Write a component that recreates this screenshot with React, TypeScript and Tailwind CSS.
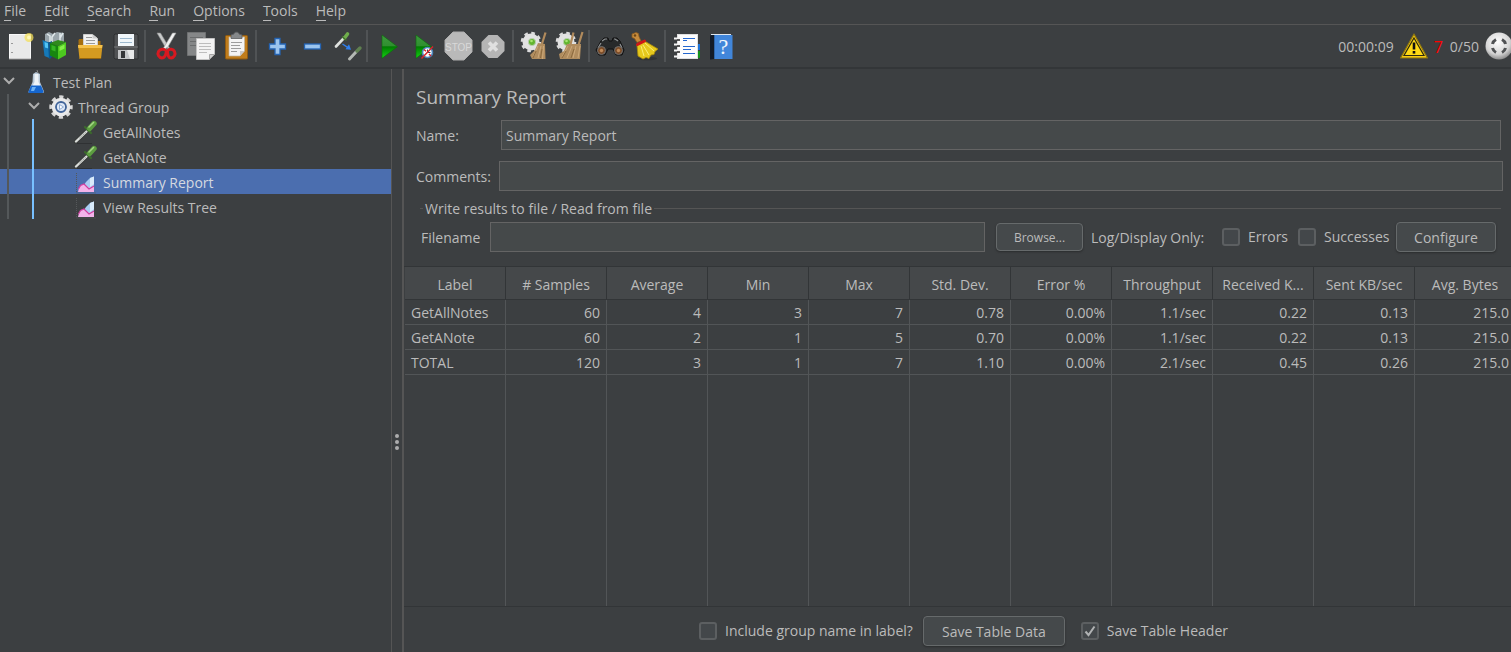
import type { ReactNode } from "react";

type IconProps = { children: ReactNode };

function Icon({ children }: IconProps) {
  return (
    <svg viewBox="0 0 32 32" className="size-8 shrink-0" fill="none" aria-hidden="true">
      {children}
    </svg>
  );
}

const NewIcon = () => (
  <Icon>
    <rect x="5.5" y="4.5" width="21" height="24" fill="#e9e9e9" stroke="#f8f8f8" />
    <path d="M5 29h22" stroke="#9a9a9a" />
    <path d="M7 13.500h2M7 22.500h2" stroke="#999" />
    <circle cx="25" cy="7.500" r="4.500" fill="#f3df5a" opacity=".75" />
    <circle cx="25" cy="7.500" r="2" fill="#fff8b8" />
  </Icon>
);

const TemplatesIcon = () => (
  <Icon>
    <path d="M6 4l4-2 4 2 4-2 7 1v9H6z" fill="#9aa5ab" />
    <path d="M8 4l3 2v6M16 3l-3 4v5M21 3v8M24 3l-3 5" stroke="#dfe7ea" strokeWidth="1.500" />
    <path d="M3.500 10l8 3v15.500l-6-2.500z" fill="#1679b8" />
    <path d="M5.500 12l4 1.500v5l-3.500-1z" fill="#52c4f5" />
    <path d="M9 13l4-2v16l-3 2z" fill="#0b588f" />
    <path d="M11 13l8 3v13.500l-8-4z" fill="#17860f" />
    <path d="M12.500 15l4 1.500v5l-4-1.500z" fill="#35b524" />
    <path d="M19 16l8-4v13l-8 4.500z" fill="#4cc81f" />
    <path d="M20.500 17l5-2.500v4l-5 2.500z" fill="#86ee4a" />
    <path d="M11 13l8-3 8 2-8 4z" fill="#2f8a1c" />
  </Icon>
);

const OpenIcon = () => (
  <Icon>
    <path d="M4.500 12V10l1-1h6l1 2h14v6H4.500z" fill="#a66f10" />
    <path d="M9.500 4.500h9l5 4V20h-14z" fill="#f1f1f1" stroke="#cfcfcf" />
    <path d="M12 7.500h6M12 10.500h9M12 13.500h9" stroke="#9b9b9b" />
    <path d="M18.500 4.500v4h5" fill="#ccc" />
    <path d="M4 15h24.500l-1.500 14H5.500z" fill="#d49a20" />
    <path d="M4 15h24.500l-.5 3H4.300z" fill="#f5c14b" />
    <path d="M5.500 28.500h21.500" stroke="#96660f" />
  </Icon>
);

const SaveIcon = () => (
  <Icon>
    <path d="M5 5l1-1h22l1 1v24H6l-1-1z" fill="#505254" stroke="#2d2f30" />
    <rect x="9" y="4" width="16" height="12" fill="#f0f6fa" />
    <path d="M11 8.500h12M11 12.500h12" stroke="#9db9cf" />
    <path d="M5 17h24" stroke="#77797a" />
    <rect x="9" y="20" width="16" height="9" fill="#c4c6c8" />
    <rect x="12" y="21" width="4" height="7" fill="#343638" />
    <path d="M18 20h7v9h-4z" fill="#e7e8e8" />
  </Icon>
);

const CutIcon = () => (
  <Icon>
    <path d="M7 3l3.500 0 9 15-2 3z" fill="#c9cbcb" stroke="#8a8c8c" strokeWidth=".6" />
    <path d="M26 3l-3.500 0-9 15 2 3z" fill="#f1f2f2" stroke="#999b9b" strokeWidth=".6" />
    <path d="M16 20.500c-2-2-6-1.500-7.500 1-1.500 3 .5 6 3.500 6.500 3 0 4-3 4.500-7.500z" stroke="#d71920" strokeWidth="3" />
    <path d="M17.500 20.500c2-2 6-1.500 7 1 1.500 3-.5 6-3.500 6.500-3 0-3.500-3-3.500-7.500z" stroke="#d71920" strokeWidth="3" />
    <circle cx="16.700" cy="18.500" r="1" fill="#777" />
  </Icon>
);

const CopyIcon = () => (
  <Icon>
    <path d="M2.500 2.500h18v23h-18z" fill="#858788" stroke="#707273" />
    <path d="M5 7.500h13M5 11.500h6M5 15.500h6" stroke="#6a6c6d" />
    <path d="M11.500 8.500h18v16l-5 5h-13z" fill="#f3f3f3" stroke="#c3c3c3" />
    <path d="M14 13.500h12M14 16.500h12M14 19.500h12M14 22.500h8" stroke="#bdbdbd" />
    <path d="M24.500 29.500v-5h5z" fill="#cfcfcf" stroke="#a6a6a6" />
  </Icon>
);

const PasteIcon = () => (
  <Icon>
    <rect x="5.500" y="5.500" width="22" height="23.500" rx="1" fill="#c07d1c" stroke="#8f5a10" />
    <path d="M9 7h15.500v14l-4.500 5H9z" fill="#f4f4f4" stroke="#bdb5a5" strokeWidth=".7" />
    <path d="M11 12.500h11M11 15.500h9M11 18.500h10M11 21.500h6" stroke="#9c9c9c" />
    <path d="M20 26v-5h4.500z" fill="#c9c9c9" />
    <path d="M11 8.500V5l3-1c0-2.500 5-2.500 5 0l3 1v3.500z" fill="#85888a" stroke="#5c5e60" strokeWidth=".8" />
  </Icon>
);

const PlusIcon = () => (
  <Icon>
    <path d="M14 8.500h5v5.500h5.500v5H19v5.500h-5V19H8.500v-5H14z" fill="#9bc4ee" stroke="#2464b4" strokeWidth="1.300" />
  </Icon>
);

const MinusIcon = () => (
  <Icon>
    <rect x="8.500" y="14" width="16" height="5" fill="#9bc4ee" stroke="#2464b4" strokeWidth="1.300" />
  </Icon>
);

const ToggleIcon = () => (
  <Icon>
    <path d="M5 16.500l8-8.500" stroke="#dfe2df" strokeWidth="2.600" strokeLinecap="round" />
    <path d="M13.500 8l3-4" stroke="#6fae4b" strokeWidth="3.600" strokeLinecap="round" />
    <path d="M11 6.500l4.500 4" stroke="#3f6f2b" strokeWidth="1.200" />
    <path d="M11.500 14l6 4" stroke="#2f7fee" strokeWidth="1.500" />
    <path d="M20 19.800l-5.500-.6 3.500-5z" fill="#2f7fee" />
    <path d="M18.500 29l6.500-7" stroke="#b4b8b4" strokeWidth="3" strokeLinecap="round" />
    <path d="M26 21l3-3" stroke="#5f8050" strokeWidth="3.400" strokeLinecap="round" />
  </Icon>
);

const PlayShape = ({ id }: { id: string }) => (
  <>
    <defs>
      <linearGradient id={id} x1="0" y1="0" x2="0" y2="1">
        <stop offset="0" stopColor="#3d9a3d" />
        <stop offset=".48" stopColor="#2f8f2f" />
        <stop offset=".5" stopColor="#007a00" />
        <stop offset="1" stopColor="#14d314" />
      </linearGradient>
    </defs>
    <path d="M10 5l15.500 11.700L10 28.300z" fill={`url(#${id})`} stroke="#0a6b0a" strokeWidth=".6" />
  </>
);

const PlayIcon = () => (
  <Icon>
    <PlayShape id="play" />
  </Icon>
);

const PlayNoTimersIcon = () => (
  <Icon>
    <g transform="translate(-1 0)">
      <PlayShape id="playNoTimers" />
    </g>
    <circle cx="20.500" cy="22.500" r="5" fill="#fff" stroke="#4d86bd" strokeWidth="1.600" />
    <path d="M20.500 19.500v3l3 0" stroke="#345" />
    <path d="M14.500 28.500l11.500-12M17 19.500l2 1.800M22 24l2 2" stroke="#d7252b" strokeWidth="1.500" />
  </Icon>
);

const StopIcon = () => (
  <Icon>
    <path d="M11 2h11l8 8v12l-8 8H11l-8-8V10z" fill="#b9b9b9" stroke="#adadad" />
    <text x="16.500" y="20.500" textAnchor="middle" className="font-['Liberation_Sans'] text-[10px]" fill="#d8d8d8">
      STOP
    </text>
  </Icon>
);

const ShutdownIcon = () => (
  <Icon>
    <path d="M11.500 5h9l7 7v9l-7 7h-9l-7-7v-9z" fill="#b5b5b5" />
    <path d="M12 12.500l8 8M20 12.500l-8 8" stroke="#e0e0e0" strokeWidth="3.600" />
  </Icon>
);

const Gear = () => (
  <>
    <circle cx="13" cy="12" r="8.500" fill="#e2e2e2" />
    <circle cx="13" cy="12" r="9" stroke="#dcdcdc" strokeWidth="2.600" strokeDasharray="3.600 3.468" />
    <circle cx="14" cy="12" r="3.600" fill="#62b52f" stroke="#b9cfae" />
    <circle cx="13.500" cy="11" r="1.300" fill="#a7e670" />
  </>
);

const ClearIcon = () => (
  <Icon>
    <Gear />
    <path d="M27.500 2.500l-4 13" stroke="#b08a5c" strokeWidth="2.200" />
    <path d="M20 13l7 1 .5 15H14l-2-4 5-5z" fill="#b08c5e" />
    <path d="M20 16l-5 11M23 16l-3 12M25.500 16l-1 13" stroke="#cda97a" />
    <path d="M18 21l-3 7M24 19l-1.500 9" stroke="#8c6a3e" />
  </Icon>
);

const ClearAllIcon = () => (
  <Icon>
    <Gear />
    <path d="M20.500 2.500l-3 12M29.500 2l-4 13" stroke="#b08a5c" strokeWidth="2.200" />
    <path d="M14 14l14 0-1 15H7l-1-5 5-3z" fill="#b08c5e" />
    <path d="M15 16l-6 11M19 16l-5 12M23 16l-3 12M27 16l-2 12" stroke="#cda97a" />
    <path d="M13 21l-4 7M21 19l-3 9" stroke="#8c6a3e" />
  </Icon>
);

const SearchIcon = () => (
  <Icon>
    <path d="M7 11l3-3h4l1 3h3l1-3h4l3 3 4 9-2 5h-6l-3-6h-5l-3 6H5l-3-5z" fill="#27292a" stroke="#111" />
    <path d="M8 11l3-2h2M24 11l-3-2h-1M4 18l3-5M28 18l-2-4" stroke="#8d9092" strokeWidth="1.200" />
    <circle cx="7.500" cy="20.500" r="4" fill="#7c4d29" stroke="#6e7072" />
    <circle cx="24.500" cy="20.500" r="4" fill="#7c4d29" stroke="#6e7072" />
    <circle cx="7.500" cy="20.500" r="1.700" fill="#c08a58" />
    <circle cx="24.500" cy="20.500" r="1.700" fill="#c08a58" />
  </Icon>
);

const ResetSearchIcon = () => (
  <Icon>
    <ellipse cx="18" cy="28.500" rx="10" ry="1.700" fill="#2a2c2d" opacity=".6" />
    <path d="M3 4l4-1.500 2.500 1 .5 3 2 4.500-4 1.500-2.500-4-2.500-1z" fill="#c58a3c" stroke="#8c5b1d" strokeWidth=".8" />
    <circle cx="6" cy="5.500" r="1.200" fill="#6d4514" />
    <path d="M8 15l7.500-4L29 19l-3 2.500-1 3-3 .5-2 3.500-3-1-3 1.500L9 26z" fill="#e6c81c" stroke="#a98c0a" strokeWidth=".8" />
    <path d="M12 16l3 10M14 15l6 10M16 13l9 8" stroke="#fbee74" />
    <path d="M8.500 14.500l7-3.500" stroke="#cf1818" strokeWidth="3" strokeLinecap="round" />
  </Icon>
);

const FunctionHelperIcon = () => (
  <Icon>
    <path d="M27 14h3v6h-3z" fill="#1a73d8" />
    <path d="M27 21h3v7h-3z" fill="#11921a" />
    <rect x="7.500" y="4.500" width="20" height="24" fill="#fdfdfd" stroke="#e0e0e0" />
    <path d="M4 8.500h6M4 14.500h6M4 20.500h6M4 26.500h6" stroke="#f3f3f3" strokeWidth="2" />
    <path d="M7 10h3M7 16h3M7 22h3" stroke="#222" strokeWidth="1.500" />
    <path d="M13 8.500h12M13 10.500h4M13 16.500h12M13 19.500h8M13 23.500h12" stroke="#2467cf" strokeWidth="1.200" />
  </Icon>
);

const HelpIcon = () => (
  <Icon>
    <path d="M5 5.500L10 4v25l-5 .5z" fill="#131c29" />
    <rect x="9" y="5" width="18.500" height="24" fill="#4186da" />
    <path d="M9.500 5v24" stroke="#2e66ab" />
    <path d="M6 4.500h20" stroke="#dfe7f0" />
    <text x="18.500" y="24" textAnchor="middle" className="font-['Liberation_Serif'] text-[22px]" fill="#f1f6fd">
      ?
    </text>
  </Icon>
);

const WarningIcon = () => (
  <svg viewBox="0 0 28 26" className="h-[26px] w-7" aria-hidden="true">
    <path d="M14 1L27.500 25H.5z" fill="#f7cb13" stroke="#8c7510" strokeWidth="1.200" strokeLinejoin="round" />
    <path d="M14 5L24 22.500H4z" fill="#ffd914" stroke="#2e2a10" strokeWidth="1.200" />
    <path d="M14 9.500v7" stroke="#111" strokeWidth="2.600" />
    <path d="M14 18v2.600" stroke="#111" strokeWidth="2.600" />
  </svg>
);

const StatusIcon = () => (
  <svg viewBox="0 0 28 28" className="size-7" fill="none" aria-hidden="true">
    <defs>
      <radialGradient id="ball" cx=".45" cy=".35" r=".65">
        <stop offset="0" stopColor="#fff" />
        <stop offset=".7" stopColor="#d4d4d4" />
        <stop offset="1" stopColor="#8d8d8d" />
      </radialGradient>
    </defs>
    <circle cx="14" cy="14" r="13.500" fill="url(#ball)" />
    <path d="M7.500 12a7 7 0 0 1 3.500-4.500M17 7.500a7 7 0 0 1 3.500 4.500M20.500 16a7 7 0 0 1-3.500 4.500M11 20.500A7 7 0 0 1 7.500 16" stroke="#505254" strokeWidth="3" />
  </svg>
);

const FlaskIcon = () => (
  <svg viewBox="0 0 18 24" className="h-6 w-[18px] shrink-0" aria-hidden="true">
    <path d="M6 4l3-2 4 2v8l4 9.500q0 1.500-1.500 1.500h-12.500Q1 23 1.500 21.500L5.500 12z" fill="#b9c9d8" />
    <path d="M7.500 4h4v8l2 4H5.500l2-4z" fill="#eef3f7" />
    <path d="M4 15.500h10l2.500 6q0 1.500-1.500 1.500h-12.500Q1 23 1.500 21.500z" fill="#1566cf" />
    <path d="M5 17h4l-2 4H4z" fill="#6cb2f6" />
    <path d="M10 0l1 3" stroke="#888" />
  </svg>
);

const ThreadGroupIcon = () => (
  <svg viewBox="0 0 24 24" className="size-6 shrink-0" fill="none" aria-hidden="true">
    <circle cx="12" cy="12" r="10" stroke="#d6d6d6" strokeWidth="3.400" strokeDasharray="4.200 3.654" strokeDashoffset="2.100" />
    <circle cx="12" cy="12" r="7.300" stroke="#e9e9e9" strokeWidth="4" />
    <circle cx="12" cy="12" r="5" fill="#dfe9f7" stroke="#42659a" strokeWidth="1.800" />
    <path d="M10.500 9.500l4 2.500-4 2.500z" fill="#fff" stroke="#8eabd3" />
  </svg>
);

const SamplerIcon = () => (
  <svg viewBox="0 0 24 24" className="size-6 shrink-0" fill="none" aria-hidden="true">
    <path d="M3 23.500h15" stroke="#2f3133" />
    <path d="M2 21.500l10.500-10" stroke="#3a3c3b" strokeWidth="4" strokeLinecap="round" />
    <path d="M2 21.500l10.500-10" stroke="#d9dcd9" strokeWidth="2.400" strokeLinecap="round" />
    <path d="M5.500 18l6-5.500" stroke="#777b77" strokeWidth=".9" strokeDasharray="1.500 1" />
    <path d="M11 7l6 6" stroke="#3c6a2c" strokeWidth="2.200" strokeLinecap="round" />
    <path d="M15.500 8.500l4.500-5" stroke="#5c9d40" strokeWidth="5.400" strokeLinecap="round" />
    <path d="M15 7l4.500-4.500" stroke="#a4d585" strokeWidth="1.600" strokeLinecap="round" />
  </svg>
);

const ListenerIcon = () => (
  <svg viewBox="0 0 24 24" className="size-6 shrink-0" fill="none" aria-hidden="true">
    <path d="M2.500 3v20h19" stroke="#55585a" strokeDasharray="1 1" />
    <path d="M10 15l2-3 4-4 4-1.500V20H9z" fill="#a9cdf3" />
    <path d="M16 8l4-1.500V14l-4 3z" fill="#d9ebfb" />
    <path d="M4 22l1-4 2-3 3-1 5 4 5-2v6z" fill="#f3b3ea" />
    <path d="M4.500 19l2-3.500 3.500-1.500 5 5 5-3" stroke="#cf3f9f" strokeWidth="1.200" />
  </svg>
);

const Chevron = () => (
  <svg viewBox="0 0 12 8" className="h-2 w-3" fill="none" aria-hidden="true">
    <path d="M1 1l5 5 5-5" stroke="#adadad" strokeWidth="2" />
  </svg>
);

const menus = ["File", "Edit", "Search", "Run", "Options", "Tools", "Help"];

const toolGroups: { label: string; icon: ReactNode }[][] = [
  [
    { label: "New", icon: <NewIcon /> },
    { label: "Templates", icon: <TemplatesIcon /> },
    { label: "Open", icon: <OpenIcon /> },
    { label: "Save", icon: <SaveIcon /> },
  ],
  [
    { label: "Cut", icon: <CutIcon /> },
    { label: "Copy", icon: <CopyIcon /> },
    { label: "Paste", icon: <PasteIcon /> },
  ],
  [
    { label: "Expand all", icon: <PlusIcon /> },
    { label: "Collapse all", icon: <MinusIcon /> },
    { label: "Toggle", icon: <ToggleIcon /> },
  ],
  [
    { label: "Start", icon: <PlayIcon /> },
    { label: "Start no pauses", icon: <PlayNoTimersIcon /> },
    { label: "Stop", icon: <StopIcon /> },
    { label: "Shutdown", icon: <ShutdownIcon /> },
  ],
  [
    { label: "Clear", icon: <ClearIcon /> },
    { label: "Clear all", icon: <ClearAllIcon /> },
  ],
  [
    { label: "Find", icon: <SearchIcon /> },
    { label: "Reset search", icon: <ResetSearchIcon /> },
  ],
  [
    { label: "Function helper", icon: <FunctionHelperIcon /> },
    { label: "Help", icon: <HelpIcon /> },
  ],
];

const tree: { label: string; level: number; icon: ReactNode; selected?: boolean }[] = [
  { label: "Test Plan", level: 0, icon: <FlaskIcon /> },
  { label: "Thread Group", level: 1, icon: <ThreadGroupIcon /> },
  { label: "GetAllNotes", level: 2, icon: <SamplerIcon /> },
  { label: "GetANote", level: 2, icon: <SamplerIcon /> },
  { label: "Summary Report", level: 2, icon: <ListenerIcon />, selected: true },
  { label: "View Results Tree", level: 2, icon: <ListenerIcon /> },
];

const columns = [
  "Label",
  "# Samples",
  "Average",
  "Min",
  "Max",
  "Std. Dev.",
  "Error %",
  "Throughput",
  "Received K...",
  "Sent KB/sec",
  "Avg. Bytes",
];

const rows = [
  ["GetAllNotes", "60", "4", "3", "7", "0.78", "0.00%", "1.1/sec", "0.22", "0.13", "215.0"],
  ["GetANote", "60", "2", "1", "5", "0.70", "0.00%", "1.1/sec", "0.22", "0.13", "215.0"],
  ["TOTAL", "120", "3", "1", "7", "1.10", "0.00%", "2.1/sec", "0.45", "0.26", "215.0"],
];

const field = "min-w-0 flex-1 border border-[#646464] bg-[#45494a] px-1 pt-0.5 outline-none";
const button = "rounded border border-[#666a6b] bg-[#45494b] pt-0.5 shadow-[0_1px_2px_#2b2d2e]";

function Check({ label, checked }: { label: string; checked?: boolean }) {
  return (
    <label className="flex items-center gap-2 whitespace-nowrap">
      <span className="grid place-items-center">
        <input
          type="checkbox"
          defaultChecked={checked}
          className="peer col-start-1 row-start-1 size-[18px] appearance-none rounded-[3px] border-2 border-[#5c5f61] bg-[#43474a]"
        />
        <svg
          viewBox="0 0 12 12"
          className="pointer-events-none invisible col-start-1 row-start-1 size-3 peer-checked:visible"
          fill="none"
          aria-hidden="true"
        >
          <path d="M1.500 6.500l3 3.500L10.500 1.500" stroke="#b0b2b3" strokeWidth="2" />
        </svg>
      </span>
      {label}
    </label>
  );
}

export default function App() {
  return (
    <div className="flex h-screen flex-col overflow-hidden bg-[#3c3f41] font-['Open_Sans','Noto_Sans',sans-serif] text-sm leading-5 text-[#bbbbbb]">
      <nav className="flex h-[25px] shrink-0 items-center gap-[18px] border-b border-[#555555] pb-0.5 pl-1">
        {menus.map((menu) => (
          <button key={menu} type="button">
            <span className="border-b border-[#bbbbbb]">{menu[0]}</span>
            {menu.slice(1)}
          </button>
        ))}
      </nav>

      <header className="flex h-11 shrink-0 items-center border-b-2 border-[#333638] pl-0.5">
        {toolGroups.map((group, index) => (
          <div key={group[0].label} className="flex items-center">
            {index > 0 && <div className="mx-0.5 h-8 w-0.5 bg-[#505355]" />}
            {group.map((tool) => (
              <button key={tool.label} type="button" aria-label={tool.label} className="flex w-[35px] justify-center">
                {tool.icon}
              </button>
            ))}
          </div>
        ))}
        <div className="-mr-0.5 ml-auto flex items-center">
          <span className="pt-0.5">00:00:09</span>
          <span className="ml-1.5">
            <WarningIcon />
          </span>
          <span className="ml-1.5 pt-0.5 text-base leading-5 text-[#ff0000]">7</span>
          <span className="ml-[7px] pt-0.5">0/50</span>
          <span className="ml-1.5">
            <StatusIcon />
          </span>
        </div>
      </header>

      <div className="flex min-h-0 flex-1">
        <aside className="w-[392px] shrink-0 border-r border-[#555555]">
          <ul>
            {tree.map((node) => (
              <li
                key={node.label}
                className={node.selected ? "flex h-[25px] items-center bg-[#4b6eaf] text-[#d5d9e0]" : "flex h-[25px] items-center"}
              >
                {node.level > 0 && (
                  <span className="flex h-full w-[25px] pl-[7px]">
                    <span className="w-0.5 bg-[#54585a]" />
                  </span>
                )}
                {node.level > 1 && (
                  <span className="flex h-full w-[25px] pl-[7px]">
                    <span className="w-0.5 bg-[#78c0ff]" />
                  </span>
                )}
                <span className="flex w-[25px] pb-0.5 pl-[3px]">{node.level < 2 && <Chevron />}</span>
                <span className="flex w-[22px] justify-center">{node.icon}</span>
                <span className="ml-1.5 pt-0.5">{node.label}</span>
              </li>
            ))}
          </ul>
        </aside>

        <div className="flex w-3 shrink-0 flex-col items-center justify-center gap-0.5 border-r-2 border-[#555555] pt-[162px]">
          <span className="size-1 rounded-full bg-[#adadad]" />
          <span className="size-1 rounded-full bg-[#adadad]" />
          <span className="size-1 rounded-full bg-[#adadad]" />
        </div>

        <main className="flex min-w-0 flex-1 flex-col">
          <h1 className="mt-4 pl-3 text-[19px] leading-6">Summary Report</h1>
          <div className="mt-[11px] flex h-[30px] items-stretch pr-2.5 pl-3">
            <label htmlFor="name" className="w-[85px] self-center pt-0.5">
              Name:
            </label>
            <input id="name" defaultValue="Summary Report" className={field} />
          </div>
          <div className="mt-[11px] flex h-[30px] items-stretch pr-2 pl-3">
            <label htmlFor="comments" className="w-[83px] self-center pt-0.5">
              Comments:
            </label>
            <input id="comments" className={field} />
          </div>

          <fieldset className="mt-[7px] mr-2.5 ml-4 min-w-0 border-t border-[#555555]">
            <legend className="ml-[3px] px-0.5 pt-px">Write results to file / Read from file</legend>
            <div className="mt-[3px] flex items-center pb-3.5 pl-px">
              <label htmlFor="filename" className="w-[69px] pt-0.5">
                Filename
              </label>
              <div className="flex h-[30px] min-w-0 flex-1">
                <input id="filename" className={field} />
              </div>
              <button type="button" className={`${button} ml-[11px] h-7 w-[87px] text-xs`}>
                Browse...
              </button>
              <span className="ml-2 w-[131px] pt-0.5 whitespace-nowrap">Log/Display Only:</span>
              <div className="w-[76px]">
                <Check label="Errors" />
              </div>
              <div className="w-[98px]">
                <Check label="Successes" />
              </div>
              <button type="button" className={`${button} mr-[5px] h-[30px] w-[100px]`}>
                Configure
              </button>
            </div>
          </fieldset>

          <div className="min-h-0 flex-1 overflow-hidden border-y border-[#323537] pl-px">
            <table className="h-full w-[calc(100%+5px)] table-fixed border-separate border-spacing-0">
              <thead>
                <tr>
                  {columns.map((column) => (
                    <th
                      key={column}
                      className="h-[33px] border-r border-b border-[#323537] bg-[#45484a] px-1 pt-[3px] pb-0 font-normal whitespace-nowrap"
                    >
                      {column}
                    </th>
                  ))}
                </tr>
              </thead>
              <tbody>
                {rows.map((row) => (
                  <tr key={row[0]}>
                    {row.map((cell, index) => (
                      <td
                        key={columns[index]}
                        className="h-[25px] border-r border-b border-[#525557] px-1.5 pt-0.5 pb-0 text-right first:text-left"
                      >
                        {cell}
                      </td>
                    ))}
                  </tr>
                ))}
                <tr className="h-full">
                  {columns.map((column) => (
                    <td key={column} className="border-r border-[#525557] p-0" />
                  ))}
                </tr>
              </tbody>
            </table>
          </div>

          <footer className="flex h-[45px] shrink-0 items-center justify-center pt-0.5 pl-3">
            <Check label="Include group name in label?" />
            <button type="button" className={`${button} mr-4 ml-2.5 h-[30px] w-[142px]`}>
              Save Table Data
            </button>
            <Check label="Save Table Header" checked />
          </footer>
        </main>
      </div>
    </div>
  );
}
